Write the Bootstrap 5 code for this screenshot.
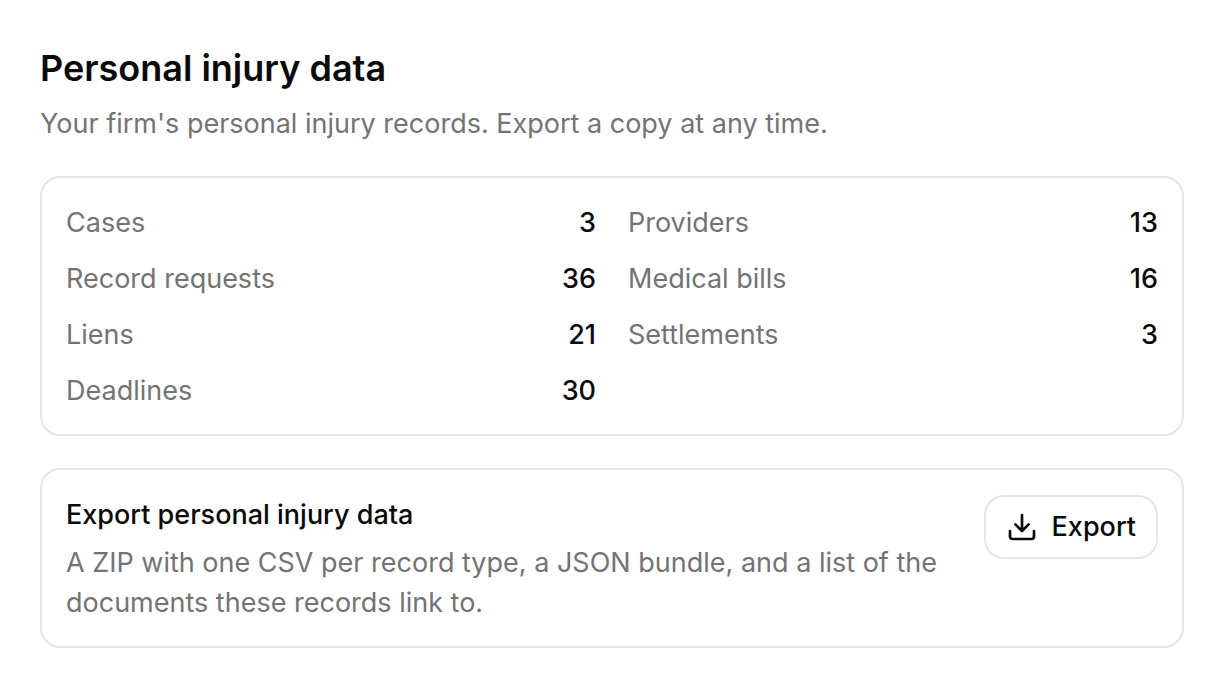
<!DOCTYPE html>
<html lang="en">
<head>
<meta charset="utf-8">
<meta name="viewport" content="width=device-width, initial-scale=1">
<title>Personal injury data</title>
<link href="https://cdn.jsdelivr.net/npm/bootstrap@5.3.0/dist/css/bootstrap.min.css" rel="stylesheet">
<style>
  :root { --ink: #0a0a0a; --muted-ink: #737373; --line: #e5e5e5; }
  body { font-family: Inter, "Liberation Sans", sans-serif; font-size: 27px; line-height: 40px; color: var(--ink); background: #fff; }
  .page { padding: 40px; }
  .stack { display: grid; gap: 32px; }
  .page-title { font-size: 36px; line-height: 56px; font-weight: 600; }
  .muted { color: var(--muted-ink); }
  .panel { border: 2px solid var(--line); border-radius: 20px; padding: 25px 24px 23px; }
  .stats { display: grid; grid-template-columns: 1fr 1fr; gap: 16px 32px; }
  .stats dt { font-weight: 400; }
  .stats dd { font-weight: 500; }
  .panel-title { font-size: 27px; line-height: 40px; font-weight: 500; }
  .blurb { max-width: 880px; }
  .btn-export { gap: 14px; font-size: 27px; line-height: 40px; font-weight: 500; color: var(--ink); border: 2px solid var(--line); border-radius: 20px; padding: 10px 20px; }
</style>
</head>
<body>
<main class="page stack">
  <header>
    <h1 class="page-title mb-2">Personal injury data</h1>
    <p class="muted mb-0">Your firm's personal injury records. Export a copy at any time.</p>
  </header>
  <dl class="panel stats mb-0">
    <div class="d-flex justify-content-between"><dt class="muted">Cases</dt><dd class="mb-0">3</dd></div>
    <div class="d-flex justify-content-between"><dt class="muted">Providers</dt><dd class="mb-0">13</dd></div>
    <div class="d-flex justify-content-between"><dt class="muted">Record requests</dt><dd class="mb-0">36</dd></div>
    <div class="d-flex justify-content-between"><dt class="muted">Medical bills</dt><dd class="mb-0">16</dd></div>
    <div class="d-flex justify-content-between"><dt class="muted">Liens</dt><dd class="mb-0">21</dd></div>
    <div class="d-flex justify-content-between"><dt class="muted">Settlements</dt><dd class="mb-0">3</dd></div>
    <div class="d-flex justify-content-between"><dt class="muted">Deadlines</dt><dd class="mb-0">30</dd></div>
  </dl>
  <section class="panel d-flex justify-content-between align-items-start gap-3">
    <div>
      <h2 class="panel-title mb-2">Export personal injury data</h2>
      <p class="muted blurb mb-0">A ZIP with one CSV per record type, a JSON bundle, and a list of the documents these records link to.</p>
    </div>
    <button type="button" class="btn btn-export d-flex align-items-center flex-shrink-0">
      <svg width="32" height="32" viewBox="0 0 24 24" fill="none" stroke="currentColor" stroke-width="2" stroke-linecap="round" stroke-linejoin="round" aria-hidden="true"><path d="M12 15V3M21 15v4a2 2 0 0 1-2 2H5a2 2 0 0 1-2-2v-4M7 10l5 5 5-5"/></svg>
      Export
    </button>
  </section>
</main>
<script src="https://cdn.jsdelivr.net/npm/bootstrap@5.3.0/dist/js/bootstrap.bundle.min.js"></script>
</body>
</html>
